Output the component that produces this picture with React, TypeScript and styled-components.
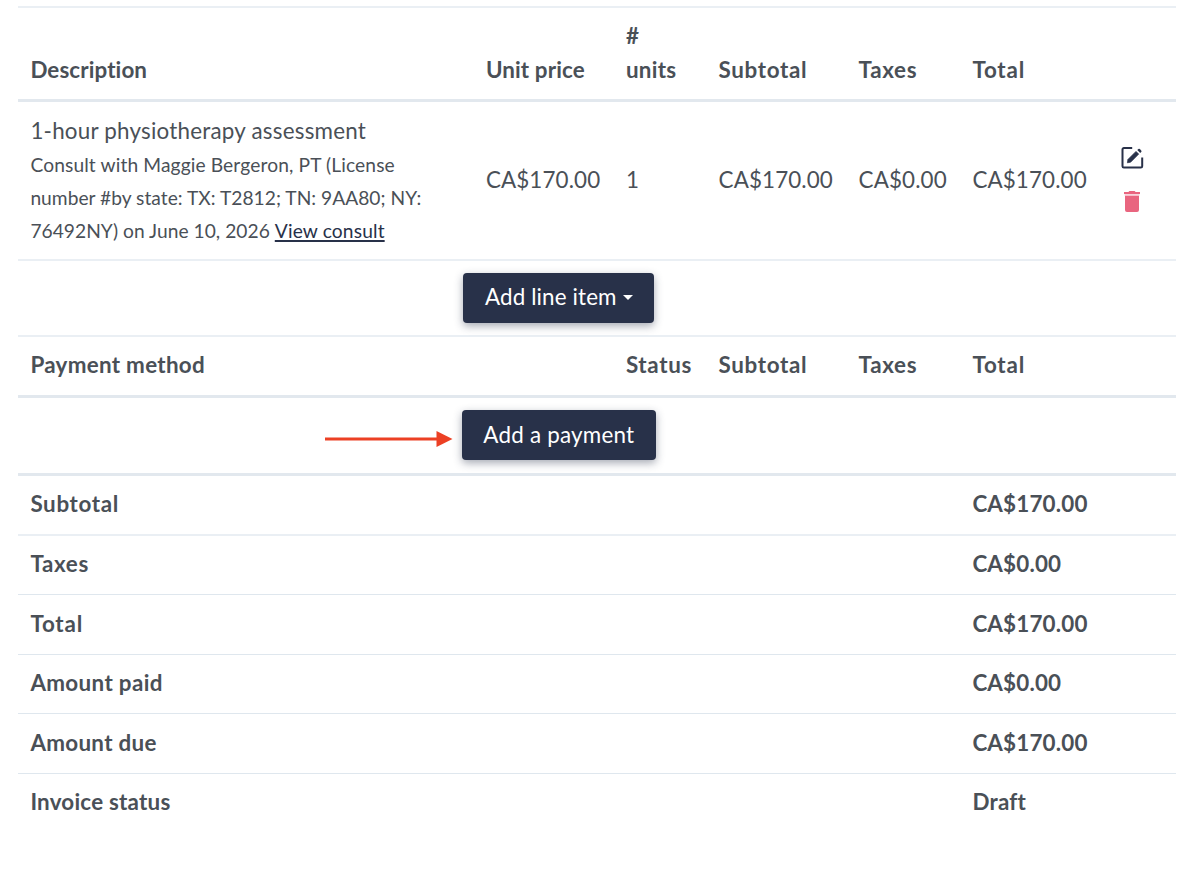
import React from "react";
import styled, { createGlobalStyle } from "styled-components";

const GlobalStyle = createGlobalStyle`
  *, *::before, *::after { box-sizing: border-box; }
  body {
    margin: 0;
    background: #fff;
    color: #4a5057;
    font-family: Lato, "Open Sans", sans-serif;
    font-size: 22.4px;
    line-height: 34px;
    font-variant-ligatures: none;
  }
`;

const Page = styled.main`
  position: relative;
  min-height: 869px;
  padding: 6px 24px 0 18px;
  overflow: hidden;
`;

const rules = {
  none: "none",
  thin: "1px solid #dfe7ee",
  soft: "2px solid #eaeff4",
  thick: "3px solid #e2e8ee",
};

const Row = styled.div<{ $height: number; $rule?: keyof typeof rules; $align?: string }>`
  display: grid;
  grid-template-columns: 455.5px 140px 92.7px 140px 113.8px 139.6px 1fr;
  align-items: ${(p) => p.$align ?? "center"};
  height: ${(p) => p.$height}px;
  border-bottom: ${(p) => rules[p.$rule ?? "soft"]};
`;

const TopRule = styled.div`
  height: 2px;
  background: #eaeff4;
`;

const Cell = styled.div<{ $from?: number; $track?: number }>`
  grid-column-start: ${(p) => p.$from ?? "auto"};
  padding: 0 12.4px;
  letter-spacing: ${(p) => p.$track ?? 0}px;
  white-space: nowrap;
`;

const HeadCell = styled(Cell)`
  font-weight: 700;
  padding-bottom: 12px;
`;

const Amount = styled(Cell)`
  padding-bottom: 2px;
`;

const Strong = styled(Cell)`
  font-weight: 700;
  padding-bottom: 2px;
`;

const Title = styled.div<{ $track?: number }>`
  height: 34px;
  letter-spacing: ${(p) => p.$track ?? 0}px;
`;

const Detail = styled.div<{ $track?: number }>`
  height: 33px;
  line-height: 33.4px;
  font-size: 19.2px;
  letter-spacing: ${(p) => p.$track ?? 0}px;
`;

const ConsultLink = styled.a`
  color: #283149;
  letter-spacing: 0.14px;
  text-decoration: underline;
  text-decoration-thickness: 1.5px;
  text-underline-offset: 2px;
  text-decoration-skip-ink: none;
`;

const ButtonCell = styled.div<{ $lift?: number }>`
  grid-column: 1 / 7;
  display: flex;
  justify-content: center;
  padding-bottom: ${(p) => p.$lift ?? 0}px;
`;

const Button = styled.button<{ $width: number; $track?: number; $lift?: number }>`
  display: flex;
  align-items: center;
  justify-content: center;
  gap: 6px;
  width: ${(p) => p.$width}px;
  height: 50px;
  padding: 0 0 ${(p) => p.$lift ?? 1}px;
  border: 0;
  border-radius: 4px;
  background: #283149;
  color: #fff;
  font: inherit;
  letter-spacing: ${(p) => p.$track ?? 0}px;
  box-shadow: 0 3px 9px rgba(40, 49, 73, 0.42);
`;

const Caret = styled.span`
  border: 5px solid transparent;
  border-top-color: #fff;
  border-bottom: 0;
`;

const Actions = styled.div`
  display: flex;
  flex-direction: column;
  gap: 20px;
  padding: 0 0 3px 20.2px;
  svg { display: block; }
`;

const Arrow = styled.svg`
  position: absolute;
  left: 325px;
  top: 430px;
`;

const EditIcon = () => (
  <svg width="24" height="24" viewBox="0 0 24 24" fill="none">
    <path d="M12.2 3H3.9a1.4 1.4 0 0 0-1.4 1.4v16.8a1.4 1.4 0 0 0 1.4 1.4h16.9a1.4 1.4 0 0 0 1.4-1.4v-8.6" stroke="#283149" strokeWidth="2" />
    <path d="M7.9 14.5 16 6.4l2.7 2.7-8.1 8.1-3.2.6z" fill="#283149" stroke="#283149" strokeWidth=".7" strokeLinejoin="round" />
    <path d="m17.3 5.1 1-1q.8-.7 1.6 0l1.3 1.3q.8.8 0 1.6l-1 1z" fill="#283149" />
  </svg>
);

const TrashIcon = () => (
  <svg width="24" height="24" viewBox="0 0 24 24" fill="#e9657f">
    <path d="M4 2.9h4.4l1-1h5.2l1 1H20v2.2H4zM5 6.7h14v14.4a2 2 0 0 1-2 2H7a2 2 0 0 1-2-2z" />
    <path d="M4.6 5.1h14.8v1.6H4.6z" opacity=".3" />
  </svg>
);

interface SummaryLine {
  label: string;
  labelTrack: number;
  value: string;
  valueTrack: number;
  height: number;
  rule: keyof typeof rules;
}

const summary: SummaryLine[] = [
  { label: "Subtotal", labelTrack: 0.65, value: "CA$170.00", valueTrack: 0.18, height: 60, rule: "soft" },
  { label: "Taxes", labelTrack: 0.65, value: "CA$0.00", valueTrack: 0.18, height: 59, rule: "thin" },
  { label: "Total", labelTrack: 0.8, value: "CA$170.00", valueTrack: 0.18, height: 60, rule: "thin" },
  { label: "Amount paid", labelTrack: 0.35, value: "CA$0.00", valueTrack: 0.18, height: 59, rule: "thin" },
  { label: "Amount due", labelTrack: 0.3, value: "CA$170.00", valueTrack: 0.18, height: 60, rule: "thin" },
  { label: "Invoice status", labelTrack: 0.22, value: "Draft", valueTrack: 0.25, height: 58, rule: "none" },
];

export default function App() {
  return (
    <Page>
      <GlobalStyle />
      <TopRule />
      <Row $height={94} $rule="thick" $align="end">
        <HeadCell $track={0.1}>Description</HeadCell>
        <HeadCell $track={0.12}>Unit price</HeadCell>
        <HeadCell $track={0.3}>#<br />units</HeadCell>
        <HeadCell $track={0.65}>Subtotal</HeadCell>
        <HeadCell $track={0.65}>Taxes</HeadCell>
        <HeadCell $track={0.8}>Total</HeadCell>
      </Row>
      <Row $height={159}>
        <Cell>
          <Title $track={0.22}>1-hour physiotherapy assessment</Title>
          <Detail $track={0.12}>Consult with Maggie Bergeron, PT (License</Detail>
          <Detail $track={0.02}>number #by state: TX: T2812; TN: 9AA80; NY:</Detail>
          <Detail $track={0.03}>
            76492NY) on June 10, 2026 <ConsultLink>View consult</ConsultLink>
          </Detail>
        </Cell>
        <Amount $track={0.12}>CA$170.00</Amount>
        <Amount>1</Amount>
        <Amount $track={0.12}>CA$170.00</Amount>
        <Amount $track={0.12}>CA$0.00</Amount>
        <Amount $track={0.12}>CA$170.00</Amount>
        <Actions>
          <EditIcon />
          <TrashIcon />
        </Actions>
      </Row>
      <Row $height={76}>
        <ButtonCell>
          <Button $width={191} $track={0.13} $lift={2}>Add line item<Caret /></Button>
        </ButtonCell>
      </Row>
      <Row $height={61} $rule="thick">
        <Strong $track={0.3}>Payment method</Strong>
        <Strong $from={3} $track={0.65}>Status</Strong>
        <Strong $track={0.65}>Subtotal</Strong>
        <Strong $track={0.65}>Taxes</Strong>
        <Strong $track={0.8}>Total</Strong>
      </Row>
      <Row $height={78} $rule="thick">
        <ButtonCell $lift={1}>
          <Button $width={194} $track={0.22}>Add a payment</Button>
        </ButtonCell>
      </Row>
      {summary.map((s) => (
        <Row key={s.label} $height={s.height} $rule={s.rule}>
          <Strong $track={s.labelTrack}>{s.label}</Strong>
          <Strong $from={6} $track={s.valueTrack}>{s.value}</Strong>
        </Row>
      ))}
      <Arrow width="128" height="18" viewBox="0 0 128 18">
        <path d="M0 9h112" stroke="#ec4024" strokeWidth="3" />
        <path d="M111.5 1v16L127.5 9z" fill="#ec4024" />
      </Arrow>
    </Page>
  );
}
